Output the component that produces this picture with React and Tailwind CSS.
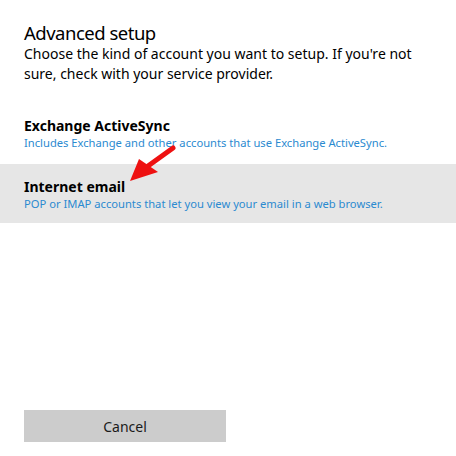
export default function App() {
  return (
    <div
      className="w-[456px] h-[456px] bg-white text-black flex flex-col overflow-hidden relative"
      style={{ fontFamily: '"Segoe UI", "Noto Sans", sans-serif' }}
    >
      {/* Header */}
      <div className="px-6 pt-[21px]">
        <h1 className="text-[18.5px] leading-[23px] font-normal tracking-[-0.5px]">Advanced setup</h1>
        <p className="text-[14px] leading-[20px]">
          Choose the kind of account you want to setup. If you're not sure, check with your service provider.
        </p>
      </div>

      {/* Account types */}
      <div className="mt-[20px] flex flex-col">
        <div className="px-6 h-[60px] pt-[13px]">
          <div className="text-[14px] leading-[18px] font-bold">Exchange ActiveSync</div>
          <div className="text-[11.2px] leading-[15px] text-[#2b8ad0]">
            Includes Exchange and other accounts that use Exchange ActiveSync.
          </div>
        </div>
        <div className="px-6 h-[59px] pt-[14px] bg-[#e6e6e6]">
          <div className="text-[14px] leading-[18px] font-bold">Internet email</div>
          <div className="text-[11.2px] leading-[15px] text-[#2b8ad0]">
            POP or IMAP accounts that let you view your email in a web browser.
          </div>
        </div>
      </div>

      <div className="flex-1" />

      {/* Footer */}
      <div className="px-6 pb-[14px]">
        <button className="w-[202px] h-[32px] bg-[#cccccc] text-[14px] text-[#1a1a1a]">Cancel</button>
      </div>

      {/* Annotation arrow */}
      <svg className="absolute left-0 top-0 pointer-events-none" width="456" height="456">
        <line x1="173" y1="148" x2="148" y2="166" stroke="#ee1111" strokeWidth="5" strokeLinecap="round" />
        <polygon points="130,181 139,159 158,172" fill="#ee1111" />
      </svg>
    </div>
  );
}
